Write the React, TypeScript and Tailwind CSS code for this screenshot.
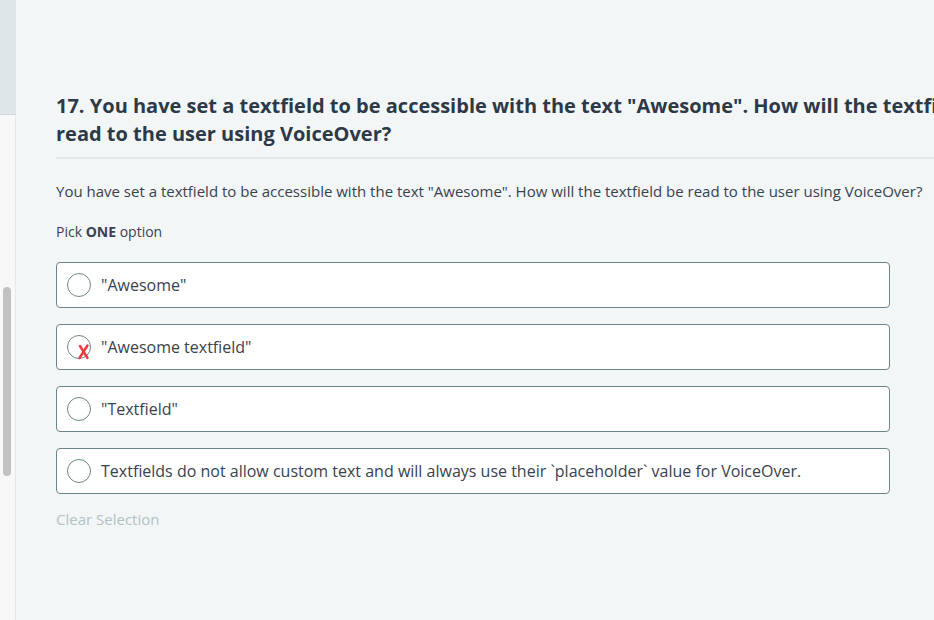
import React from 'react';

const options = [
  { id: 'a', label: '"Awesome"', wrong: false },
  { id: 'b', label: '"Awesome textfield"', wrong: true },
  { id: 'c', label: '"Textfield"', wrong: false },
  {
    id: 'd',
    label: 'Textfields do not allow custom text and will always use their `placeholder` value for VoiceOver.',
    wrong: false,
  },
];

function Radio({ wrong }: { wrong: boolean }) {
  return (
    <div className="relative h-6 w-6 shrink-0">
      <div className="h-6 w-6 rounded-full border border-[#6b8487] bg-white"></div>
      {wrong && (
        <svg className="absolute left-[10px] top-[8px]" width="13" height="17" viewBox="0 0 13 17">
          <path d="M3 3 L10.5 15" stroke="#f1363d" strokeWidth="2.4" strokeLinecap="round" />
          <path d="M10.5 2.5 L2.5 15" stroke="#f1363d" strokeWidth="2.4" strokeLinecap="round" />
        </svg>
      )}
    </div>
  );
}

export default function App() {
  return (
    <div
      className="flex h-[620px] w-[934px] overflow-hidden bg-[#f2f6f7]"
      style={{ fontFamily: '"Open Sans", sans-serif' }}
    >
      {/* Left rail */}
      <div className="flex w-4 shrink-0 flex-col">
        <div className="h-[115px] border-b border-[#cfd8db] bg-[#dfe6e9]"></div>
        <div className="flex flex-1 justify-center border-r border-[#e3e8ea] bg-[#f8f8f8] pr-[2px]">
          <div className="mt-[172px] h-[189px] w-2 rounded bg-[#c1c1c1]"></div>
        </div>
      </div>

      {/* Question */}
      <div className="min-w-0 flex-1 pl-10 pt-[92px]">
        <div className="w-[1100px] border-b-2 border-[#e3e8ea] pb-[9px]">
          <h1 className="whitespace-nowrap text-[20px] font-bold leading-[28px] text-[#2e3947]">
            17. You have set a textfield to be accessible with the text "Awesome". How will the textfield be
            <br />
            read to the user using VoiceOver?
          </h1>
        </div>

        <p className="mt-[22px] whitespace-nowrap text-[15px] leading-5 text-[#39424e]">
          You have set a textfield to be accessible with the text "Awesome". How will the textfield be read to the user
          using VoiceOver?
        </p>

        <p className="mt-[21px] text-[14px] leading-5 text-[#39424e]">
          Pick <span className="font-bold">ONE</span> option
        </p>

        <div className="mt-5 flex w-[834px] flex-col gap-4">
          {options.map((o) => (
            <div
              key={o.id}
              className="flex h-[46px] items-center gap-[10px] rounded border border-[#6b8487] bg-white px-[10px]"
            >
              <Radio wrong={o.wrong} />
              <span className="text-[16px] text-[#39424e]">{o.label}</span>
            </div>
          ))}
        </div>

        <div className="mt-[15px] text-[15px] leading-5 text-[#b2c2c6]">Clear Selection</div>
      </div>
    </div>
  );
}
